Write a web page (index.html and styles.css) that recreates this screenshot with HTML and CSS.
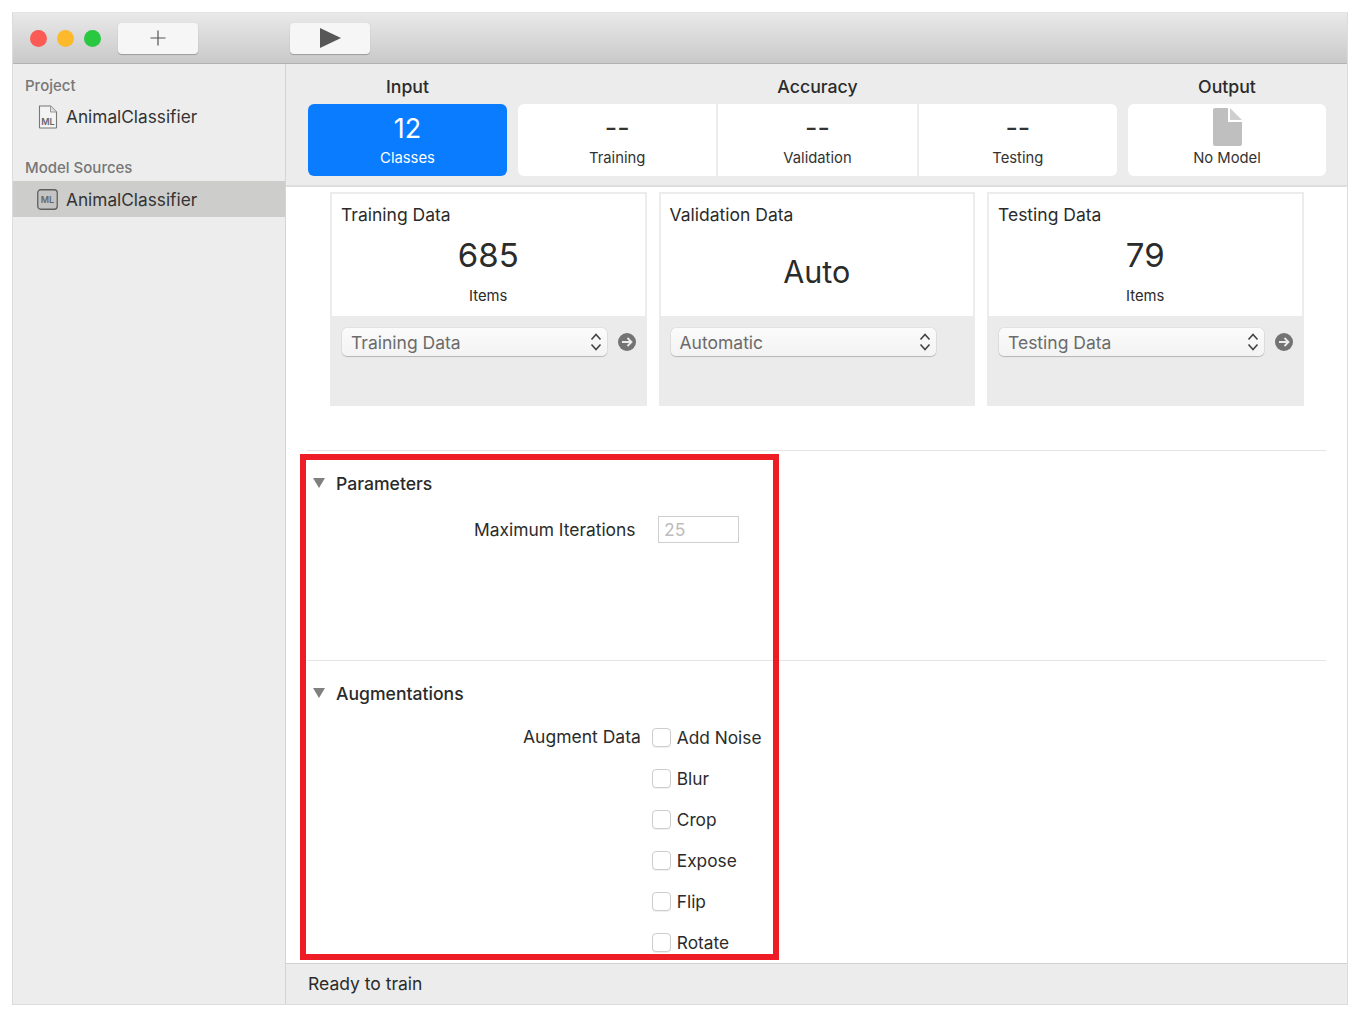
FILE: index.html
```html
<!DOCTYPE html>
<html lang="en">
<head>
<meta charset="utf-8">
<title>AnimalClassifier</title>
<link rel="stylesheet" href="styles.css">
</head>
<body>
<div class="window">
  <header class="titlebar">
    <div class="lights">
      <span class="light red"></span><span class="light yellow"></span><span class="light green"></span>
    </div>
    <button class="tool add" aria-label="Add">
      <svg width="16" height="16" viewBox="0 0 16 16"><path d="M8 .5v15M.5 8h15" stroke="#555" stroke-width="1.2" fill="none"/></svg>
    </button>
    <button class="tool play" aria-label="Run">
      <svg width="21" height="20" viewBox="0 0 21 20"><path d="M0 0L21 10L0 20Z" fill="#575757"/></svg>
    </button>
  </header>
  <div class="body">
    <aside class="sidebar">
      <div class="side-label first">Project</div>
      <div class="side-row project">
        <svg class="file-ic" width="20" height="24" viewBox="0 0 20 24"><path d="M1.5 1h11l6 6v15.500a.5.5 0 0 1-.5.5H2a.5.5 0 0 1-.5-.5V1z" fill="#f4f4f4" stroke="#777" stroke-width="1.100"/><path d="M12.500 1v6h6" fill="#ddd" stroke="#999"/><text x="10" y="20" class="ic-text" text-anchor="middle">ML</text></svg>
        <span>AnimalClassifier</span>
      </div>
      <div class="side-label second">Model Sources</div>
      <div class="side-row selected">
        <svg class="ml-ic" width="21" height="21" viewBox="0 0 21 21"><rect x=".75" y=".75" width="19.500" height="19.500" rx="3" fill="#c4c4c4" stroke="#5f5f5f" stroke-width="1.300"/><text x="10.500" y="14" class="ic-text" text-anchor="middle">ML</text></svg>
        <span>AnimalClassifier</span>
      </div>
    </aside>
    <main class="main">
      <section class="tabs">
        <div class="tab-group input">
          <div class="tab-title">Input</div>
          <div class="tiles"><div class="tile active"><div class="tile-big">12</div><div class="tile-small">Classes</div></div></div>
        </div>
        <div class="tab-group accuracy">
          <div class="tab-title">Accuracy</div>
          <div class="tiles">
            <div class="tile"><div class="tile-big">--</div><div class="tile-small">Training</div></div>
            <div class="tile"><div class="tile-big">--</div><div class="tile-small">Validation</div></div>
            <div class="tile"><div class="tile-big">--</div><div class="tile-small">Testing</div></div>
          </div>
        </div>
        <div class="tab-group output">
          <div class="tab-title">Output</div>
          <div class="tiles"><div class="tile"><div class="tile-doc">
            <svg width="29" height="38" viewBox="0 0 29 38"><path d="M2 0h13v14h14v22a2 2 0 0 1-2 2H2a2 2 0 0 1-2-2V2a2 2 0 0 1 2-2z" fill="#bfbfbf"/><path d="M17 0l12 12H17z" fill="#cfcfcf"/></svg>
          </div><div class="tile-small">No Model</div></div></div>
        </div>
      </section>
      <div class="content">
        <section class="cards">
          <article class="card">
            <div class="card-top">
              <h3>Training Data</h3>
              <div class="card-num">685</div>
              <div class="card-unit">Items</div>
            </div>
            <div class="card-bottom">
              <div class="select"><span>Training Data</span><svg width="12" height="20" viewBox="0 0 12 20"><path d="M1.500 7.500L6 2.500l4.500 5M1.500 12.500L6 17.500l4.500-5" fill="none" stroke="#444" stroke-width="1.600"/></svg></div>
              <svg class="go" width="18" height="18" viewBox="0 0 18 18"><circle cx="9" cy="9" r="9" fill="#737373"/><path d="M4 9h9M9.500 5l4 4-4 4" fill="none" stroke="#ececec" stroke-width="1.800"/></svg>
            </div>
          </article>
          <article class="card">
            <div class="card-top">
              <h3>Validation Data</h3>
              <div class="card-num auto">Auto</div>
            </div>
            <div class="card-bottom">
              <div class="select"><span>Automatic</span><svg width="12" height="20" viewBox="0 0 12 20"><path d="M1.500 7.500L6 2.500l4.500 5M1.500 12.500L6 17.500l4.500-5" fill="none" stroke="#444" stroke-width="1.600"/></svg></div>
            </div>
          </article>
          <article class="card">
            <div class="card-top">
              <h3>Testing Data</h3>
              <div class="card-num">79</div>
              <div class="card-unit">Items</div>
            </div>
            <div class="card-bottom">
              <div class="select"><span>Testing Data</span><svg width="12" height="20" viewBox="0 0 12 20"><path d="M1.500 7.500L6 2.500l4.500 5M1.500 12.500L6 17.500l4.500-5" fill="none" stroke="#444" stroke-width="1.600"/></svg></div>
              <svg class="go" width="18" height="18" viewBox="0 0 18 18"><circle cx="9" cy="9" r="9" fill="#737373"/><path d="M4 9h9M9.500 5l4 4-4 4" fill="none" stroke="#ececec" stroke-width="1.800"/></svg>
            </div>
          </article>
        </section>
        <section class="panel params">
          <h2 class="panel-head"><span class="tri"></span>Parameters</h2>
          <div class="param-row"><span class="param-label">Maximum Iterations</span><div class="num-input">25</div></div>
        </section>
        <section class="panel augs">
          <h2 class="panel-head"><span class="tri"></span>Augmentations</h2>
          <div class="aug-grid">
            <span class="aug-label">Augment Data</span>
            <ul class="checks">
              <li><span class="box"></span>Add Noise</li>
              <li><span class="box"></span>Blur</li>
              <li><span class="box"></span>Crop</li>
              <li><span class="box"></span>Expose</li>
              <li><span class="box"></span>Flip</li>
              <li><span class="box"></span>Rotate</li>
            </ul>
          </div>
        </section>
      </div>
      <footer class="status">Ready to train</footer>
    </main>
  </div>
  <div class="highlight"></div>
</div>
</body>
</html>
```
FILE: styles.css
```css
* { box-sizing: border-box; }
html, body { margin: 0; padding: 0; background: #fff; }
body { height: 1017px; padding: 12px; font-family: Inter, "Noto Sans", "Liberation Sans", sans-serif; color: #2b2b2b; overflow: hidden; }
h2, h3, ul { margin: 0; padding: 0; font-weight: 400; }
li { list-style: none; }

.window { position: relative; width: 1336px; height: 993px; display: flex; flex-direction: column; border: 1px solid #dcdcdc; border-top-color: #e2e2e2; }

.titlebar { height: 51px; flex: none; display: flex; align-items: center; padding-left: 17px; background: linear-gradient(#e9e9e9, #c9c9c9); border-bottom: 1px solid #b2b2b2; }
.lights { display: flex; gap: 10px; width: 88px; }
.light { width: 17px; height: 17px; border-radius: 50%; }
.red { background: #fb5a55; }
.yellow { background: #fdb92c; }
.green { background: #28c840; }
.tool { width: 80px; height: 31px; padding: 0; border: 0; border-radius: 4px; background: #f6f6f6; box-shadow: 0 1px 1px rgba(0,0,0,.25); display: flex; align-items: center; justify-content: center; }
.add { margin-right: 92px; }

.body { flex: 1; display: flex; min-height: 0; }
.sidebar { width: 273px; flex: none; background: #ededed; border-right: 1px solid #d4d4d4; }
.side-label { padding-left: 12px; font-size: 15px; font-weight: 500; color: #777; line-height: 20px; }
.side-label.first { margin-top: 12px; }
.side-label.second { margin-top: 24px; }
.side-row { height: 36px; display: flex; align-items: center; padding-left: 25px; gap: 8px; font-size: 17.250px; color: #333; }
.side-row.project { margin-top: 2px; margin-bottom: 1px; }
.side-row.selected { background: #cdcdcc; margin-top: 3px; padding-left: 24px; }
.file-ic { margin-top: 1px; }
.ic-text { font-size: 9px; font-weight: 600; fill: #666; font-family: Inter, sans-serif; }

.main { flex: 1; min-width: 0; display: flex; flex-direction: column; background: #fff; }
.tabs { height: 123px; flex: none; display: flex; padding-left: 22px; background: #ececec; border-bottom: 2px solid #dedede; }
.tab-group { display: flex; flex-direction: column; }
.input { width: 199px; margin-right: 11px; }
.accuracy { width: 599px; margin-right: 11px; }
.output { width: 198px; }
.tab-title { height: 40px; padding-top: 12px; text-align: center; font-size: 17.700px; font-weight: 500; line-height: 22px; color: #2b2b2b; }
.tiles { height: 72px; display: flex; background: #fff; border-radius: 6px; overflow: hidden; }
.tile { flex: 1; display: flex; flex-direction: column; align-items: center; color: #333; }
.tile + .tile { border-left: 2px solid #ececec; }
.tile.active { background: #0a7cff; color: #fff; }
.tile-big { height: 45px; padding-top: 6px; font-size: 27px; line-height: 36px; }
.active .tile-big { padding-top: 7px; }
.tile-doc { height: 45px; padding-top: 4px; }
.tile-small { font-size: 14.800px; line-height: 18px; }

.content { flex: 1; min-height: 0; overflow: hidden; padding: 5px 21px 0 21px; }
.cards { display: flex; gap: 12px; padding: 0 21.500px 0 23px; height: 259px; border-bottom: 1px solid #e4e4e4; }
.card { width: 316.500px; height: 214px; background: #ebebeb; }
.card-top { height: 124px; background: #fff; border: 2px solid #ececec; border-bottom: 0; padding: 10px 9px 0 9px; display: flex; flex-direction: column; }
.card-top h3 { font-size: 17.500px; line-height: 22px; }
.card-num { text-align: center; font-size: 33px; line-height: 40px; margin-top: 9px; }
.card-num.auto { margin-top: 26px; font-size: 30.500px; }
.card-unit { text-align: center; font-size: 14.800px; line-height: 18px; margin-top: 12px; }
.card-bottom { display: flex; align-items: center; gap: 11px; padding: 12px 11px 0 12px; }
.select { width: 265px; height: 28px; flex: none; display: flex; align-items: center; justify-content: space-between; padding: 0 5px 0 9px; background: linear-gradient(#fbfbfb, #f3f3f3); border-radius: 5px; box-shadow: 0 0 1px rgba(0,0,0,.35), 0 1px 1px rgba(0,0,0,.2); font-size: 17.500px; color: #6b6b6b; }
.go { flex: none; }

.panel { border-bottom: 1px solid #e4e4e4; }
.params { height: 210px; }
.augs { border-bottom: 0; }
.panel-head { display: flex; align-items: center; height: 22px; margin-top: 21px; font-size: 17.600px; font-weight: 500; color: #2b2b2b; }
.params .panel-head { margin-top: 0; position: relative; top: 21px; }
.tri { width: 0; height: 0; margin: 0 11px 0 6px; border-left: 6.500px solid transparent; border-right: 6.500px solid transparent; border-top: 10px solid #808080; }
.param-row { display: flex; align-items: center; margin-top: 43px; padding-left: 167px; gap: 22.500px; }
.param-label { font-size: 17.400px; }
.num-input { width: 81px; height: 27px; border: 1px solid #cfcfcf; padding-left: 5px; color: #bdbdbd; font-size: 17.500px; line-height: 25px; }

.aug-grid { display: flex; margin-top: 22px; padding-left: 216px; gap: 11px; }
.aug-label { font-size: 17.500px; line-height: 22px; }
.checks { display: flex; flex-direction: column; gap: 19px; }
.checks li { display: flex; align-items: center; gap: 6px; height: 22px; font-size: 17.300px; }
.box { width: 19px; height: 19px; background: #fff; border: 1px solid #cdcdcd; border-radius: 4px; box-shadow: 0 1px 0 rgba(0,0,0,.06); }

.status { height: 41px; flex: none; padding-left: 22px; background: #ececec; border-top: 1px solid #d0d0d0; font-size: 17.500px; line-height: 40px; }

.highlight { position: absolute; left: 287px; top: 441px; width: 479px; height: 506px; border: 6px solid #ee1c25; pointer-events: none; }
```
